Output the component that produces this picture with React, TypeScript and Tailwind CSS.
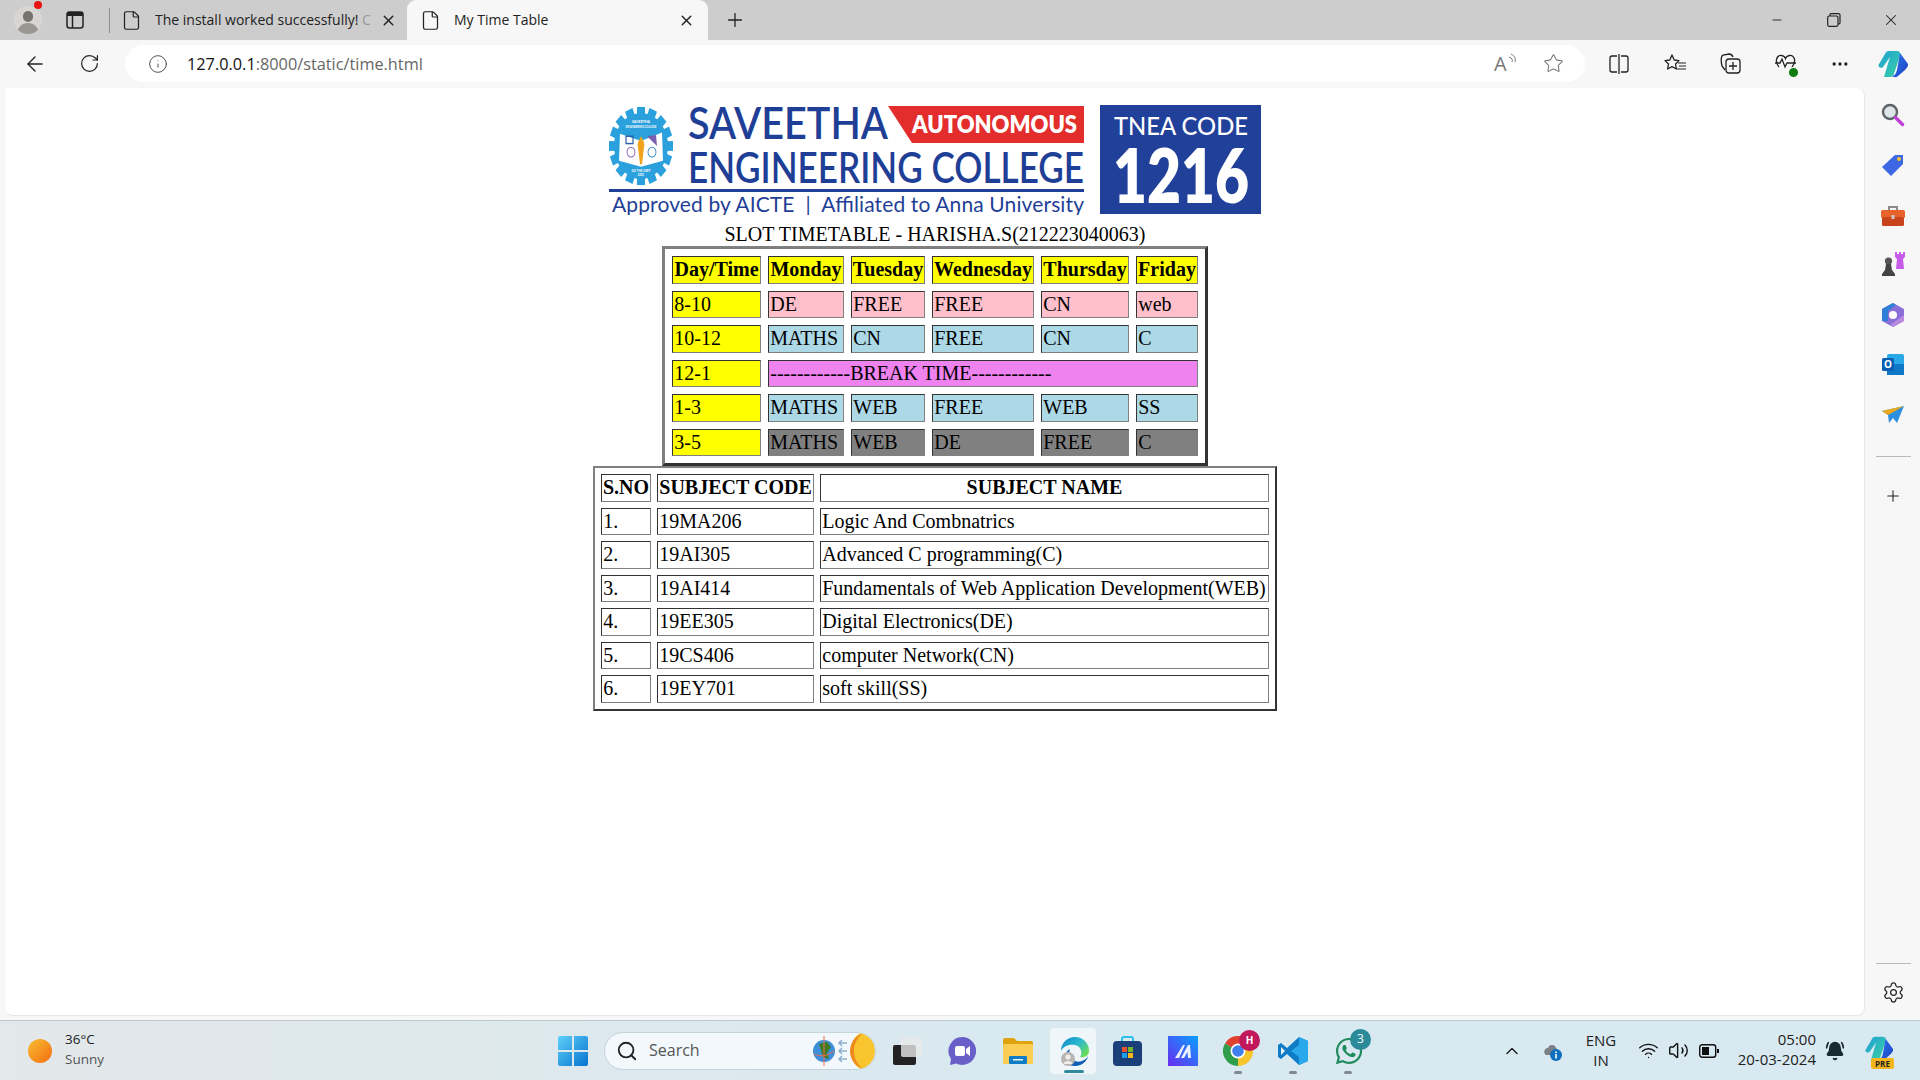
import { ArrowLeft, RotateCw, Info, Plus, X, Minus, Star, Search, ChevronUp, BellRing, Wifi, Volume2, File, Settings, MoreHorizontal } from "lucide-react"
import { FaWhatsapp } from "react-icons/fa"

const timetable = [
  { time: "8-10", bg: "bg-[#ffc0cb]", cells: ["DE", "FREE", "FREE", "CN", "web"] },
  { time: "10-12", bg: "bg-[#add8e6]", cells: ["MATHS", "CN", "FREE", "CN", "C"] },
  { time: "12-1", bg: "bg-[#ee82ee]", cells: ["------------BREAK TIME------------"] },
  { time: "1-3", bg: "bg-[#add8e6]", cells: ["MATHS", "WEB", "FREE", "WEB", "SS"] },
  { time: "3-5", bg: "bg-[#808080]", cells: ["MATHS", "WEB", "DE", "FREE", "C"] },
]

const subjects = [
  ["1.", "19MA206", "Logic And Combnatrics"],
  ["2.", "19AI305", "Advanced C programming(C)"],
  ["3.", "19AI414", "Fundamentals of Web Application Development(WEB)"],
  ["4.", "19EE305", "Digital Electronics(DE)"],
  ["5.", "19CS406", "computer Network(CN)"],
  ["6.", "19EY701", "soft skill(SS)"],
]

const cell = "h-[27.5px] p-0 px-[1.25px] border border-t-[#333] border-l-[#333] border-r-[#808080] border-b-[#808080] text-left align-middle"
const head = "h-[27.5px] p-0 border border-t-[#333] border-l-[#333] border-r-[#808080] border-b-[#808080] text-center font-bold align-middle"

function Logo() {
  const logoFont = "Lato, 'Open Sans', sans-serif"
  return (
    <svg width="653" height="110" viewBox="609 105 653 110" className="block shrink-0">
      <g transform="translate(641 146) scale(1 1.22)">
        {Array.from({ length: 16 }).map((_, i) => (
          <rect key={i} x="-4" y="-32" width="8" height="8" fill="#2aa0dc" transform={`rotate(${i * 22.5})`} />
        ))}
        <circle r="27" fill="#2aa0dc" />
        <text y="-19" textAnchor="middle" fontSize="3.6" fontWeight="700" fill="#fff" fontFamily={logoFont}>SAVEETHA</text>
        <text y="-14.5" textAnchor="middle" fontSize="2.7" fontWeight="700" fill="#fff" fontFamily={logoFont}>ENGINEERING COLLEGE</text>
        <path d="M-21 -10 L0 -4 L21 -11 L22 12 L0 17 L-22 12 Z" fill="#fff" />
        <rect x="-15" y="-8" width="7" height="6" fill="none" stroke="#2b5fa8" strokeWidth="1.2" />
        <path d="M6 -8 L15 -9 L16 0 Z" fill="#7a5fb0" />
        <circle cx="-10" cy="5" r="4" fill="none" stroke="#8a5fb8" strokeWidth="0.9" />
        <circle cx="11" cy="5" r="4" fill="none" stroke="#3a8fc8" strokeWidth="0.9" />
        <path d="M0 -8 C3 -4 4 -1 3 1 L1 15 L-1 15 L-3 1 C-4 -1 -3 -4 0 -8 Z" fill="#f2a31c" />
        <text y="21" textAnchor="middle" fontSize="3" fontWeight="700" fill="#fff" fontFamily={logoFont}>GO THE DEET</text>
        <text y="25" textAnchor="middle" fontSize="2.8" fontWeight="700" fill="#fff" fontFamily={logoFont}>2001</text>
      </g>
      <text x="688" y="139" fontSize="45" fontWeight="600" fill="#1f3f97" fontFamily={logoFont} textLength="200" lengthAdjust="spacingAndGlyphs">SAVEETHA</text>
      <path d="M888 106 H1084 V143 H912 Z" fill="#e32c2c" />
      <text x="912" y="133" fontSize="24" fontWeight="800" fill="#fff" fontFamily={logoFont} textLength="165" lengthAdjust="spacingAndGlyphs">AUTONOMOUS</text>
      <text x="688" y="183" fontSize="43" fontWeight="600" fill="#1f3f97" fontFamily={logoFont} textLength="396" lengthAdjust="spacingAndGlyphs">ENGINEERING COLLEGE</text>
      <rect x="609" y="189" width="475" height="3" fill="#1f3f97" />
      <text x="612" y="212" fontSize="21" fill="#1f3f97" fontFamily={logoFont} textLength="472" lengthAdjust="spacing" className="whitespace-pre">Approved by AICTE  |  Affiliated to Anna University</text>
      <rect x="1100" y="105" width="161" height="109" fill="#21409a" />
      <text x="1114" y="135" fontSize="25" fontWeight="500" fill="#fff" fontFamily={logoFont} textLength="134" lengthAdjust="spacingAndGlyphs">TNEA CODE</text>
      <text x="1113" y="203" fontSize="76" fontWeight="800" fill="#fff" fontFamily={logoFont} textLength="136" lengthAdjust="spacingAndGlyphs">1216</text>
    </svg>
  )
}

function Avatar() {
  return (
    <div className="relative w-[28px] h-[28px] rounded-full bg-[#d8d6d2] overflow-hidden shrink-0">
      <div className="mx-auto mt-[5px] w-[10px] h-[11px] rounded-full bg-[#77736f]" />
      <div className="mx-auto mt-[1px] w-[22px] h-[12px] rounded-t-full bg-[#9a9692]" />
    </div>
  )
}

function Copilot({ size = 30 }: { size?: number }) {
  return (
    <svg width={size} height={size} viewBox="0 0 30 30">
      <defs>
        <linearGradient id="cpa" x1="0" y1="0" x2="1" y2="1">
          <stop offset="0" stopColor="#1f9fd8" />
          <stop offset="1" stopColor="#39d3a0" />
        </linearGradient>
        <linearGradient id="cpb" x1="0" y1="0" x2="1" y2="1">
          <stop offset="0" stopColor="#2f7bf0" />
          <stop offset="1" stopColor="#1b3fc0" />
        </linearGradient>
      </defs>
      <path d="M11 2 H19 C21 2 22 3 22.500 5 L16 25 C15 28 13 28 11 28 H6 L12 8 L5 18 C3 20 0 18 0.500 16 L7 5 C8 3 9 2 11 2 Z" fill="url(#cpa)" />
      <path d="M22 4 L30 15 C30.500 17 29 19 27 21 L20 27 C18 29 15 28 14 27 C17 27 18 24 19 21 L22 4 Z" fill="url(#cpb)" />
    </svg>
  )
}

function SideIcon({ children }: { children: React.ReactNode }) {
  return <div className="h-[50px] flex items-center justify-center">{children}</div>
}

function Sidebar() {
  return (
    <div className="w-[55px] flex flex-col items-center pt-[2px] pl-[1px]">
      <SideIcon>
        <svg width="24" height="24" viewBox="0 0 24 24">
          <circle cx="9" cy="9" r="7" fill="#dfe6ea" stroke="#5d6468" strokeWidth="2.4" />
          <path d="M14.500 14.500 L21.500 21.500" stroke="#c13fd8" strokeWidth="3.400" strokeLinecap="round" />
        </svg>
      </SideIcon>
      <SideIcon>
        <svg width="24" height="24" viewBox="0 0 24 24">
          <path d="M14 2 H22 V11 L10 23 L1 14 Z" fill="#3e67e6" />
          <circle cx="18" cy="6" r="2" fill="#f4c430" />
        </svg>
      </SideIcon>
      <SideIcon>
        <svg width="24" height="22" viewBox="0 0 24 22" className="mt-[1px]">
          <path d="M8 5 V2 H16 V5" fill="none" stroke="#8a8a8a" strokeWidth="2" />
          <rect x="0" y="5" width="24" height="8" rx="1.500" fill="#e8632c" />
          <rect x="1" y="12" width="22" height="9" rx="1.500" fill="#c8431c" />
          <rect x="10.500" y="10" width="3" height="4" fill="#c9c9c9" />
        </svg>
      </SideIcon>
      <SideIcon>
        <svg width="24" height="24" viewBox="0 0 24 24" className="-mt-[2px]">
          <path d="M14 0 H16 V2 H18 V0 H20 V2 H22 V0 H24 V5 L22 7 L23 17 H15 L16 7 L14 5 Z" fill="#c65ce8" />
          <circle cx="7.500" cy="9" r="3.600" fill="#555" />
          <path d="M5 12 H10 L11 18 L14 22 V24 H1 V22 L4 18 Z" fill="#444" />
        </svg>
      </SideIcon>
      <SideIcon>
        <svg width="22" height="24" viewBox="0 0 22 24">
          <path d="M11 0 L22 6 V18 L11 24 L0 18 V6 Z" fill="#8a6fd8" />
          <path d="M0 6 L11 0 L14 2 L6 8 V18 L0 18 Z" fill="#2f7fd8" />
          <path d="M22 12 V18 L11 24 L8 22 Z" fill="#b78ae0" />
          <circle cx="11" cy="12" r="4" fill="#fff" />
        </svg>
      </SideIcon>
      <SideIcon>
        <svg width="22" height="22" viewBox="0 0 22 22">
          <rect x="5" y="0" width="17" height="21" rx="2" fill="#29a8e8" />
          <path d="M5 10 H22 V21 H5 Z" fill="#0f78c8" />
          <rect x="0" y="4" width="12" height="13" rx="1.500" fill="#0a5fb0" />
          <text x="6" y="14" textAnchor="middle" fontSize="10" fontWeight="700" fill="#fff" fontFamily="'Open Sans', sans-serif">O</text>
        </svg>
      </SideIcon>
      <SideIcon>
        <svg width="22" height="18" viewBox="0 0 22 18">
          <path d="M0 5 L22 0 L15 17 L11 12 L7 17 L6 9 Z" fill="#2f8fe0" />
          <path d="M0 5 L22 0 L6 9 Z" fill="#f0a818" />
        </svg>
      </SideIcon>
      <div className="mt-[16px] w-[35px] h-px bg-[#b9b9b9]" />
      <div className="mt-[39px] h-[2px]">
        <Plus size={18} strokeWidth={1.4} className="text-[#222] -mt-[9px]" />
      </div>
      <div className="mt-auto w-[35px] h-px bg-[#b9b9b9]" />
      <div className="mt-[17px] mb-[12px]">
        <Settings size={23} strokeWidth={1.3} className="text-[#222]" />
      </div>
    </div>
  )
}

function Taskbar() {
  return (
    <div className="h-[60px] flex items-center relative border-t border-[#bcc8ce] bg-gradient-to-r from-[#e3e8ea] via-[#d9e9f0] to-[#d9e9f1] text-[#222] text-[14px]">
      <div className="w-[558px] flex items-center pl-[28px] shrink-0">
        <div className="w-[24px] h-[24px] rounded-full bg-gradient-to-br from-[#f6bd30] to-[#f26a10]" />
        <div className="ml-[13px] -mt-[3px] leading-[20px] text-[13.5px]">
          <div>36°C</div>
          <div className="text-[#555]">Sunny</div>
        </div>
      </div>

      <svg width="30" height="30" viewBox="0 0 30 30" className="shrink-0">
        <defs>
          <linearGradient id="win" x1="0" y1="0" x2="1" y2="1">
            <stop offset="0" stopColor="#5ed0fa" />
            <stop offset="1" stopColor="#0672cf" />
          </linearGradient>
        </defs>
        <path d="M0 2 Q0 0 2 0 H14 V14 H0 Z M16 0 H28 Q30 0 30 2 V14 H16 Z M0 16 H14 V30 H2 Q0 30 0 28 Z M16 16 H30 V28 Q30 30 28 30 H16 Z" fill="url(#win)" />
      </svg>

      <div className="ml-[16px] w-[272px] h-[38px] rounded-full bg-[#f2f8fb] border border-[#c4d4dc] flex items-center pl-[11px] shrink-0 overflow-hidden">
        <Search size={22} strokeWidth={2} className="text-[#222]" />
        <span className="ml-[11px] -mt-[1px] text-[16px] text-[#555]">Search</span>
        <svg width="62" height="36" viewBox="0 0 62 36" className="ml-auto">
          <circle cx="11" cy="18" r="11" fill="#3d8fd8" />
          <path d="M6 11 L14 9 L18 14 L14 20 L16 26 L10 24 L8 17 Z" fill="#3f7a22" />
          <path d="M11 3 V33 M1 21 Q11 26 21 18" stroke="#f0684c" strokeWidth="1" fill="none" />
          <path d="M26 10 H34 M26 18 H34 M26 26 H34 M29 7 L26 10 L29 13 M29 15 L26 18 L29 21 M29 23 L26 26 L29 29" stroke="#8fb0cc" strokeWidth="1.500" fill="none" />
          <ellipse cx="50" cy="18" rx="12" ry="18" fill="#f8c52f" />
          <path d="M50 0 C40 4 37 12 37 18 C37 24 40 32 50 36 C43 30 41 24 41 18 C41 12 43 6 50 0 Z" fill="#ef8a1d" />
        </svg>
      </div>

      <div className="ml-[17px] relative w-[30px] h-[28px] shrink-0">
        <div className="absolute left-0 bottom-0 w-[23px] h-[20px] rounded-[2px] bg-[#222]" />
        <div className="absolute left-[8px] top-0 w-[21px] h-[20px] rounded-[2px] bg-[#e8e8e8]/80" />
      </div>

      <svg width="28" height="28" viewBox="0 0 28 28" className="ml-[25px] shrink-0">
        <path d="M14 0 A14 14 0 1 1 8 26.600 L2 28 L3 22 A14 14 0 0 1 14 0 Z" fill="#6a5fc8" />
        <rect x="7" y="9" width="10" height="10" rx="2" fill="#fff" />
        <path d="M18 12 L22 9 V19 L18 16 Z" fill="#fff" />
      </svg>

      <svg width="30" height="26" viewBox="0 0 30 26" className="ml-[27px] shrink-0">
        <path d="M0 2 Q0 0 2 0 H11 L14 3 H28 Q30 3 30 5 V10 H0 Z" fill="#dfa30e" />
        <rect x="0" y="6" width="30" height="20" rx="1.500" fill="#fbcd52" />
        <rect x="6" y="18" width="18" height="8" rx="1" fill="#0f7cc8" />
        <rect x="10" y="21" width="10" height="1.500" fill="#e8f4fb" />
      </svg>

      <div className="ml-[16px] relative w-[48px] h-[48px] rounded-[5px] bg-[#eef6fa] border border-[#dfe8ed] flex items-start justify-center pt-[8px] pl-[3px] shrink-0">
        <svg width="30" height="30" viewBox="0 0 30 30">
          <defs>
            <linearGradient id="edge" x1="0" y1="0" x2="1" y2="0.700">
              <stop offset="0" stopColor="#0f86c8" />
              <stop offset="0.550" stopColor="#2bb8d0" />
              <stop offset="1" stopColor="#6bdc5a" />
            </linearGradient>
          </defs>
          <path d="M1 15 A14 14 0 0 1 29 15 C29 20 24 22 20 21 C23 17 21 10 15 9 C8 8 3 11 1 15 Z" fill="url(#edge)" />
          <path d="M10 13 C7 20 13 28 22 25 C25 24 27 22 28 20 C27 26 21 30 15 30 C11 30 8 29 5 26 C4 20 6 15 10 13 Z" fill="#0f5db8" />
          <circle cx="8" cy="23" r="7" fill="#b8b4b0" />
          <circle cx="8" cy="21" r="2.600" fill="#f0efee" />
          <path d="M3.500 28 C4 24 12 24 12.500 28 Z" fill="#f0efee" />
        </svg>
        <div className="absolute left-[14px] bottom-[1px] w-[20px] h-[3px] rounded-full bg-[#2f8a9c]" />
      </div>

      <svg width="29" height="30" viewBox="0 0 29 30" className="ml-[16px] shrink-0">
        <path d="M9 6 V3 Q9 1 11 1 H18 Q20 1 20 3 V6" fill="none" stroke="#29c0ee" strokeWidth="2" />
        <rect x="0" y="5" width="29" height="25" rx="4" fill="#1b3f78" />
        <rect x="9" y="11" width="5" height="5" fill="#e8502c" />
        <rect x="15" y="11" width="5" height="5" fill="#76b82a" />
        <rect x="9" y="17" width="5" height="5" fill="#18a0e8" />
        <rect x="15" y="17" width="5" height="5" fill="#fbb81c" />
      </svg>

      <svg width="30" height="30" viewBox="0 0 30 30" className="ml-[26px] shrink-0">
        <defs>
          <linearGradient id="mapp" x1="1" y1="0" x2="0" y2="1">
            <stop offset="0" stopColor="#0a9fff" />
            <stop offset="1" stopColor="#6a2cf0" />
          </linearGradient>
        </defs>
        <rect width="30" height="30" fill="url(#mapp)" />
        <path d="M7 22 L15 9 H17 L11 22 Z M13 22 L20 9 H22 L23 22 H20 L19.500 16 L16 22 Z" fill="#e8f0ff" />
      </svg>

      <div className="ml-[25px] relative w-[30px] h-[30px] shrink-0">
        <svg width="30" height="30" viewBox="0 0 30 30">
          <path d="M15 15 L2 7.500 A15 15 0 0 1 28 7.500 Z" fill="#e0402f" />
          <path d="M15 15 L28 7.500 A15 15 0 0 1 15 30 Z" fill="#f7c52b" />
          <path d="M15 15 L15 30 A15 15 0 0 1 2 7.500 Z" fill="#2f9e4a" />
          <circle cx="15" cy="15" r="7.500" fill="#fff" />
          <circle cx="15" cy="15" r="5.800" fill="#3f80ee" />
        </svg>
        <div className="absolute -top-[6px] left-[16px] w-[21px] h-[21px] rounded-full bg-[#c2185b] text-white text-[10px] font-bold flex items-center justify-center">H</div>
        <div className="absolute -bottom-[8px] left-[11px] w-[8px] h-[3px] rounded-full bg-[#7f8a90]" />
      </div>

      <div className="ml-[25px] relative w-[30px] h-[30px] shrink-0">
        <svg width="30" height="30" viewBox="0 0 30 30">
          <path d="M21 1 L30 5 V25 L21 29 L9 18 L3 23 L0 21 V9 L3 7 L9 12 Z" fill="#0f7cc8" />
          <path d="M21 1 L30 5 V25 L21 29 Z M21 9 L13 15 L21 21 Z" fill="#29a8ec" fillRule="evenodd" />
          <path d="M3 11 L7 15 L3 19 Z" fill="#eaf3f8" />
        </svg>
        <div className="absolute -bottom-[8px] left-[11px] w-[8px] h-[3px] rounded-full bg-[#7f8a90]" />
      </div>

      <div className="ml-[26px] relative w-[30px] h-[30px] shrink-0">
        <FaWhatsapp size={30} className="text-[#1f8a5c]" />
        <div className="absolute -top-[7px] left-[16px] w-[21px] h-[21px] rounded-full bg-[#2a8a9a] text-white text-[12px] flex items-center justify-center">3</div>
        <div className="absolute -bottom-[8px] left-[10px] w-[8px] h-[3px] rounded-full bg-[#7f8a90]" />
      </div>

      <div className="ml-auto flex items-center pr-[25px]">
        <ChevronUp size={20} strokeWidth={1.8} className="text-[#222]" />
        <svg width="20" height="20" viewBox="0 0 20 20" className="ml-[21px]">
          <path d="M3 14 C0 12 1 7 5 7 C6 3 12 3 13 7 C15 8 15 12 14 14 Z" fill="#7b8085" />
          <circle cx="13" cy="14" r="6" fill="#1070c0" />
          <rect x="12.200" y="13" width="1.600" height="4.500" fill="#fff" />
          <rect x="12.200" y="10.500" width="1.600" height="1.600" fill="#fff" />
        </svg>
        <div className="ml-[19px] -mt-[2px] w-[38px] text-center leading-[20px] text-[15px] text-[#222]">
          <div>ENG</div>
          <div>IN</div>
        </div>
        <Wifi size={21} strokeWidth={1.6} className="ml-[18px] text-[#111]" />
        <Volume2 size={21} strokeWidth={1.6} className="ml-[9px] text-[#111]" />
        <svg width="20" height="14" viewBox="0 0 20 14" className="ml-[10px]">
          <rect x="0.700" y="0.700" width="16" height="12.600" rx="2.500" fill="none" stroke="#111" strokeWidth="1.400" />
          <rect x="3" y="3" width="7" height="8" fill="#111" />
          <rect x="18" y="5" width="2" height="4" fill="#111" />
        </svg>
        <div className="ml-[11px] -mt-[3px] w-[86px] text-right leading-[20px] text-[15px] text-[#222] whitespace-nowrap">
          <div>05:00</div>
          <div>20-03-2024</div>
        </div>
        <BellRing size={20} className="ml-[9px] text-[#1a2a33] fill-[#1a2a33]" />
        <div className="ml-[20px] relative w-[30px] h-[32px]">
          <Copilot size={28} />
          <div className="absolute -bottom-[2px] left-[6px] w-[23px] h-[11px] rounded-[2px] bg-[#f5b51e] text-[8px] font-bold leading-[11px] text-center text-[#222]">PRE</div>
        </div>
      </div>
    </div>
  )
}

export default function App() {
  return (
    <div className="w-[1920px] h-[1080px] overflow-hidden flex flex-col bg-[#f7f7f7] text-[#111]" style={{ fontFamily: "'Open Sans', sans-serif" }}>
      {/* tab strip */}
      <div className="h-10 bg-[#cdcdcd] flex items-center shrink-0">
        <div className="ml-[14px]"><Avatar /></div>
        <div className="relative">
          <div className="absolute -top-[19px] -left-[8px] w-[8px] h-[8px] rounded-full bg-[#e81313]" />
        </div>
        <svg width="18" height="18" viewBox="0 0 18 18" className="ml-[24px]">
          <rect x="1" y="1" width="16" height="16" rx="2.500" fill="none" stroke="#222" strokeWidth="1.500" />
          <rect x="1" y="1" width="16" height="4" fill="#222" />
          <path d="M6.500 5 V17" stroke="#222" strokeWidth="1.500" />
        </svg>
        <div className="ml-[25px] w-px h-[25px] bg-[#8f8f8f]" />
        <File size={21} strokeWidth={1.4} className="ml-[11px] text-[#222]" />
        <span className="ml-[13px] -mt-[2px] w-[216px] text-[14px] whitespace-nowrap overflow-hidden text-[#222]">The install worked successfully! <span className="text-[#999]">C</span></span>
        <X size={17} strokeWidth={2} className="ml-[9px] text-[#222]" />
        <div className="ml-[10px] w-[301px] h-10 bg-[#f7f7f7] rounded-t-[9px] flex items-center">
          <File size={21} strokeWidth={1.4} className="ml-[13px] text-[#222]" />
          <span className="ml-[13px] -mt-[2px] text-[14px] text-[#222]">My Time Table</span>
          <X size={17} strokeWidth={2} className="ml-auto mr-[13px] text-[#222]" />
        </div>
        <Plus size={22} strokeWidth={1.4} className="ml-[16px] text-[#222]" />
        <Minus size={14} strokeWidth={1.6} className="ml-auto text-[#222]" />
        <svg width="14" height="14" viewBox="0 0 14 14" className="ml-[43px]">
          <path d="M3 3 V1.500 Q3 0.700 4 0.700 H11.500 Q13 0.700 13 2 V10 Q13 11 11.500 11 H11" fill="none" stroke="#222" strokeWidth="1.200" />
          <rect x="0.700" y="3" width="10.300" height="10.300" rx="1.500" fill="none" stroke="#222" strokeWidth="1.200" />
        </svg>
        <X size={18} strokeWidth={1.4} className="ml-[41px] mr-[20px] text-[#222]" />
      </div>

      {/* toolbar */}
      <div className="h-12 flex items-center shrink-0 pb-[1px]">
        <ArrowLeft size={24} strokeWidth={1.4} className="ml-[23px] text-[#222]" />
        <RotateCw size={21} strokeWidth={1.4} className="ml-[32px] text-[#222]" />
        <div className="ml-[25px] w-[1460px] h-[37px] rounded-full bg-white flex items-center shrink-0">
          <Info size={20} strokeWidth={1.1} className="ml-[23px] text-[#444]" />
          <span className="ml-[19px] mt-[1px] text-[16.3px] text-[#111]">127.0.0.1<span className="text-[#666]">:8000/static/time.html</span></span>
          <div className="ml-auto relative w-[22px] h-[20px] text-[#777] text-[20px] leading-[20px]">
            A
            <svg width="10" height="12" viewBox="0 0 10 12" className="absolute -top-[1px] -right-[3px]">
              <path d="M2 1 C6 3 7 6 6 9 M0 4 C3 5 4 7 3 9" fill="none" stroke="#777" />
            </svg>
          </div>
          <Star size={21} strokeWidth={1.2} className="ml-[27px] mr-[21px] text-[#777]" />
        </div>
        <svg width="20" height="20" viewBox="0 0 20 20" className="ml-[24px]">
          <path d="M8 2 H3 Q1 2 1 4 V16 Q1 18 3 18 H8 M12 2 H17 Q19 2 19 4 V16 Q19 18 17 18 H12 M10 0 V20" fill="none" stroke="#222" strokeWidth="1.300" />
        </svg>
        <svg width="22" height="20" viewBox="0 0 22 20" className="ml-[35px]">
          <path d="M8 1 L10.200 6 L15 6.600 L11.500 10 L12.400 15 L8 12.700 L3.600 15 L4.500 10 L1 6.600 L5.800 6 Z" fill="none" stroke="#222" strokeWidth="1.300" strokeLinejoin="round" />
          <path d="M14 9 H22 M15 12 H22 M13 15 H22" stroke="#222" strokeWidth="1.200" />
        </svg>
        <svg width="21" height="21" viewBox="0 0 21 21" className="ml-[34px]">
          <path d="M5 17 L2 13 Q0 4 3 2 L9 1 Q12 1 13 4" fill="none" stroke="#222" strokeWidth="1.300" />
          <rect x="6" y="6" width="14" height="14" rx="3" fill="none" stroke="#222" strokeWidth="1.300" />
          <path d="M13 9 V17 M9 13 H17" stroke="#222" strokeWidth="1.300" />
        </svg>
        <div className="ml-[34px] relative w-[21px] h-[20px]">
          <svg width="21" height="20" viewBox="0 0 21 20">
            <path d="M4 13 C-1 7 2 1 6.500 1.500 C8.500 1.800 10 3 10.500 4.500 C11 3 12.500 1.800 14.500 1.500 C19 1 22 7 17 13" fill="none" stroke="#222" strokeWidth="1.300" />
            <path d="M0 9 H5 L7 5 L10 13 L12 9 H21" fill="none" stroke="#222" strokeWidth="1.300" />
          </svg>
          <div className="absolute -right-[3px] -bottom-[4px] w-[11px] h-[11px] rounded-full bg-[#107c10] border border-white" />
        </div>
        <MoreHorizontal size={20} strokeWidth={2} className="ml-[34px] text-[#222]" />
        <div className="ml-[28px]"><Copilot /></div>
      </div>

      {/* page + sidebar */}
      <div className="h-[928px] flex shrink-0">
        <div className="ml-[5px] w-[1860px] rounded-tr-[8px] rounded-br-[8px] rounded-bl-[8px] bg-white border-r border-b border-[#e6e6e6] flex flex-col items-center pt-[17px] pl-[2px] text-black text-[20px] leading-[23px]" style={{ fontFamily: "'Liberation Serif', serif" }}>
          <Logo />
          <div className="mt-[8px] -ml-[1px]">SLOT TIMETABLE - HARISHA.S(212223040063)</div>

          <table className="-ml-[1px] border-separate border-spacing-[7px] border-[3px] border-t-[#808080] border-l-[#808080] border-r-[#333] border-b-[#333]">
            <thead>
              <tr>
                <th className={`${head} bg-[#ffff00] w-[89px]`}>Day/Time</th>
                <th className={`${head} bg-[#ffff00] w-[76px]`}>Monday</th>
                <th className={`${head} bg-[#ffff00] w-[74px]`}>Tuesday</th>
                <th className={`${head} bg-[#ffff00] w-[102px]`}>Wednesday</th>
                <th className={`${head} bg-[#ffff00] w-[88px]`}>Thursday</th>
                <th className={`${head} bg-[#ffff00] w-[62px]`}>Friday</th>
              </tr>
            </thead>
            <tbody>
              {timetable.map(row => (
                <tr key={row.time}>
                  <td className={`${cell} bg-[#ffff00]`}>{row.time}</td>
                  {row.cells.map((text, i) => (
                    <td key={i} colSpan={row.cells.length === 1 ? 5 : 1} className={`${cell} ${row.bg}`}>{text}</td>
                  ))}
                </tr>
              ))}
            </tbody>
          </table>

          <table className="-ml-[1px] border-separate border-spacing-[6px] border-2 border-t-[#808080] border-l-[#808080] border-r-[#333] border-b-[#333]">
            <thead>
              <tr>
                <th className={`${head} w-[50px]`}>S.NO</th>
                <th className={`${head} w-[157px]`}>SUBJECT CODE</th>
                <th className={`${head} w-[449px]`}>SUBJECT NAME</th>
              </tr>
            </thead>
            <tbody>
              {subjects.map(row => (
                <tr key={row[0]}>
                  {row.map((text, i) => (
                    <td key={i} className={cell}>{text}</td>
                  ))}
                </tr>
              ))}
            </tbody>
          </table>
        </div>
        <Sidebar />
      </div>

      <div className="h-[4px] shrink-0" />
      <Taskbar />
    </div>
  )
}
